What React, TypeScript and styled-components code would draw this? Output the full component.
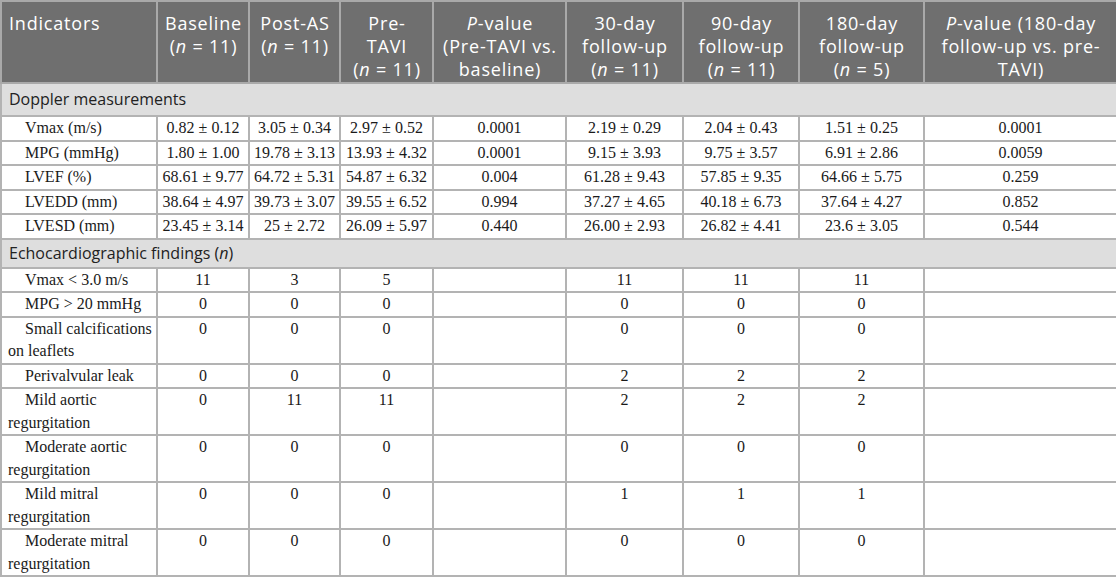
import React from "react";
import styled, { createGlobalStyle } from "styled-components";

const GlobalStyle = createGlobalStyle`
  html, body { margin: 0; padding: 0; background: #ffffff; }
  #root { width: 1116px; }
`;

const Table = styled.table`
  width: 1116px;
  border-collapse: collapse;
  table-layout: fixed;
  border: 2px solid #b3b3b3;
`;

const HeadCell = styled.th<{ $align?: "left" | "center" }>`
  background: #6f6f6f;
  color: #ffffff;
  font-family: "Open Sans", "Noto Sans", sans-serif;
  font-weight: 400;
  font-size: 18px;
  letter-spacing: 0.8px;
  line-height: 23px;
  text-align: ${(p) => p.$align ?? "center"};
  vertical-align: top;
  padding: 10px 6px 1px 7px;
  border: 2px solid #a9a9a9;
`;

const SectionCell = styled.td<{ $pad: number }>`
  background: #dedede;
  color: #222222;
  font-family: "Open Sans", "Noto Sans", sans-serif;
  font-size: 16px;
  line-height: 21px;
  padding: ${(p) => p.$pad}px 7px;
  border: 2px solid #b3b3b3;
  text-align: left;
`;

const LabelCell = styled.td`
  font-family: "Liberation Serif", "Times New Roman", serif;
  font-size: 16px;
  line-height: 22.5px;
  color: #1a1a1a;
  padding: 0 0 0 6px;
  text-indent: 17px;
  text-align: left;
  vertical-align: top;
  border: 2px solid #b3b3b3;
`;

const ValueCell = styled.td`
  font-family: "Liberation Serif", "Times New Roman", serif;
  font-size: 16px;
  line-height: 22.5px;
  color: #1a1a1a;
  padding: 0 4px;
  text-align: center;
  vertical-align: top;
  white-space: nowrap;
  border: 2px solid #b3b3b3;
`;

const widths = [156, 92, 91, 93, 133, 117, 116, 125, 193];

type Row = { label: string; values: string[] };

const doppler: Row[] = [
  { label: "Vmax (m/s)", values: ["0.82 ± 0.12", "3.05 ± 0.34", "2.97 ± 0.52", "0.0001", "2.19 ± 0.29", "2.04 ± 0.43", "1.51 ± 0.25", "0.0001"] },
  { label: "MPG (mmHg)", values: ["1.80 ± 1.00", "19.78 ± 3.13", "13.93 ± 4.32", "0.0001", "9.15 ± 3.93", "9.75 ± 3.57", "6.91 ± 2.86", "0.0059"] },
  { label: "LVEF (%)", values: ["68.61 ± 9.77", "64.72 ± 5.31", "54.87 ± 6.32", "0.004", "61.28 ± 9.43", "57.85 ± 9.35", "64.66 ± 5.75", "0.259"] },
  { label: "LVEDD (mm)", values: ["38.64 ± 4.97", "39.73 ± 3.07", "39.55 ± 6.52", "0.994", "37.27 ± 4.65", "40.18 ± 6.73", "37.64 ± 4.27", "0.852"] },
  { label: "LVESD (mm)", values: ["23.45 ± 3.14", "25 ± 2.72", "26.09 ± 5.97", "0.440", "26.00 ± 2.93", "26.82 ± 4.41", "23.6 ± 3.05", "0.544"] },
];

const echo: Row[] = [
  { label: "Vmax < 3.0 m/s", values: ["11", "3", "5", "", "11", "11", "11", ""] },
  { label: "MPG > 20 mmHg", values: ["0", "0", "0", "", "0", "0", "0", ""] },
  { label: "Small calcifications on leaflets", values: ["0", "0", "0", "", "0", "0", "0", ""] },
  { label: "Perivalvular leak", values: ["0", "0", "0", "", "2", "2", "2", ""] },
  { label: "Mild aortic regurgitation", values: ["0", "11", "11", "", "2", "2", "2", ""] },
  { label: "Moderate aortic regurgitation", values: ["0", "0", "0", "", "0", "0", "0", ""] },
  { label: "Mild mitral regurgitation", values: ["0", "0", "0", "", "1", "1", "1", ""] },
  { label: "Moderate mitral regurgitation", values: ["0", "0", "0", "", "0", "0", "0", ""] },
];

const DataRows = ({ rows }: { rows: Row[] }) => (
  <>
    {rows.map((r) => (
      <tr key={r.label}>
        <LabelCell>{r.label}</LabelCell>
        {r.values.map((v, i) => (
          <ValueCell key={i}>{v}</ValueCell>
        ))}
      </tr>
    ))}
  </>
);

export default function App() {
  return (
    <>
      <GlobalStyle />
      <Table>
        <colgroup>
          {widths.map((w, i) => (
            <col key={i} style={{ width: w }} />
          ))}
        </colgroup>
        <thead>
          <tr>
            <HeadCell $align="left">Indicators</HeadCell>
            <HeadCell>
              Baseline<br />(<i>n</i> = 11)
            </HeadCell>
            <HeadCell>
              Post-AS<br />(<i>n</i> = 11)
            </HeadCell>
            <HeadCell>
              Pre-<br />TAVI<br />(<i>n</i> = 11)
            </HeadCell>
            <HeadCell>
              <i>P</i>-value<br />(Pre-TAVI vs.<br />baseline)
            </HeadCell>
            <HeadCell>
              30-day<br />follow-up<br />(<i>n</i> = 11)
            </HeadCell>
            <HeadCell>
              90-day<br />follow-up<br />(<i>n</i> = 11)
            </HeadCell>
            <HeadCell>
              180-day<br />follow-up<br />(<i>n</i> = 5)
            </HeadCell>
            <HeadCell>
              <i>P</i>-value (180-day<br />follow-up vs. pre-<br />TAVI)
            </HeadCell>
          </tr>
        </thead>
        <tbody>
          <tr>
            <SectionCell colSpan={9} $pad={5}>
              Doppler measurements
            </SectionCell>
          </tr>
          <DataRows rows={doppler} />
          <tr>
            <SectionCell colSpan={9} $pad={3}>
              Echocardiographic findings (<i>n</i>)
            </SectionCell>
          </tr>
          <DataRows rows={echo} />
        </tbody>
      </Table>
    </>
  );
}
